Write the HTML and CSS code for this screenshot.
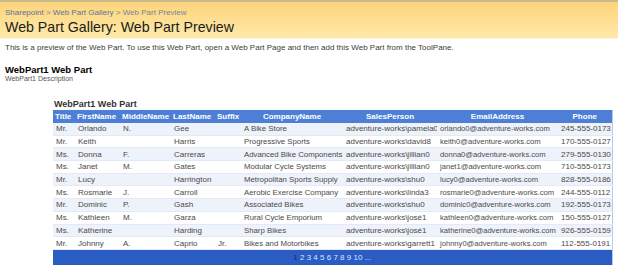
FILE: index.html
```html
<!DOCTYPE html>
<html lang="en">
  <head>
    <meta charset="UTF-8" />
    <title>Web Part Preview</title>
    <link rel="stylesheet" href="styles.css">
  </head>

  <body>
    <div class="titlebar">
      <div class="crumbs">
        <a href="#">Sharepoint</a> &gt; <a href="#">Web Part Gallery</a> &gt; Web Part Preview
      </div>
      <h1>Web Part Gallery: Web Part Preview</h1>
    </div>
    <!--titlebar end-->

    <p class="intro">This is a preview of the Web Part. To use this Web Part, open a Web Part Page and then add this Web Part from the ToolPane.</p>

    <div class="part">
      <h2>WebPart1 Web Part</h2>
      <div class="desc">WebPart1 Description</div>
    </div>

    <div class="grid">
      <h3>WebPart1 Web Part</h3>
      <table>
        <colgroup>
          <col class="c-title" />
          <col class="c-first" />
          <col class="c-middle" />
          <col class="c-last" />
          <col class="c-suffix" />
          <col class="c-company" />
          <col class="c-sales" />
          <col class="c-email" />
          <col class="c-phone" />
        </colgroup>
        <thead>
          <tr>
            <th>Title</th>
            <th>FirstName</th>
            <th>MiddleName</th>
            <th>LastName</th>
            <th>Suffix</th>
            <th>CompanyName</th>
            <th>SalesPerson</th>
            <th>EmailAddress</th>
            <th>Phone</th>
          </tr>
        </thead>
        <tbody>
          <tr><td>Mr.</td><td>Orlando</td><td>N.</td><td>Gee</td><td></td><td>A Bike Store</td><td>adventure-works\pamela0</td><td>orlando0@adventure-works.com</td><td>245-555-0173</td></tr>
          <tr><td>Mr.</td><td>Keith</td><td></td><td>Harris</td><td></td><td>Progressive Sports</td><td>adventure-works\david8</td><td>keith0@adventure-works.com</td><td>170-555-0127</td></tr>
          <tr><td>Ms.</td><td>Donna</td><td>F.</td><td>Carreras</td><td></td><td>Advanced Bike Components</td><td>adventure-works\jillian0</td><td>donna0@adventure-works.com</td><td>279-555-0130</td></tr>
          <tr><td>Ms.</td><td>Janet</td><td>M.</td><td>Gates</td><td></td><td>Modular Cycle Systems</td><td>adventure-works\jillian0</td><td>janet1@adventure-works.com</td><td>710-555-0173</td></tr>
          <tr><td>Mr.</td><td>Lucy</td><td></td><td>Harrington</td><td></td><td>Metropolitan Sports Supply</td><td>adventure-works\shu0</td><td>lucy0@adventure-works.com</td><td>828-555-0186</td></tr>
          <tr><td>Ms.</td><td>Rosmarie</td><td>J.</td><td>Carroll</td><td></td><td>Aerobic Exercise Company</td><td>adventure-works\linda3</td><td>rosmarie0@adventure-works.com</td><td>244-555-0112</td></tr>
          <tr><td>Mr.</td><td>Dominic</td><td>P.</td><td>Gash</td><td></td><td>Associated Bikes</td><td>adventure-works\shu0</td><td>dominic0@adventure-works.com</td><td>192-555-0173</td></tr>
          <tr><td>Ms.</td><td>Kathleen</td><td>M.</td><td>Garza</td><td></td><td>Rural Cycle Emporium</td><td>adventure-works\josé1</td><td>kathleen0@adventure-works.com</td><td>150-555-0127</td></tr>
          <tr><td>Ms.</td><td>Katherine</td><td></td><td>Harding</td><td></td><td>Sharp Bikes</td><td>adventure-works\josé1</td><td>katherine0@adventure-works.com</td><td>926-555-0159</td></tr>
          <tr><td>Mr.</td><td>Johnny</td><td>A.</td><td>Caprio</td><td>Jr.</td><td>Bikes and Motorbikes</td><td>adventure-works\garrett1</td><td>johnny0@adventure-works.com</td><td>112-555-0191</td></tr>
        </tbody>
        <tfoot>
          <tr>
            <td colspan="9" class="pager">
              <span class="current">1</span>
              <a href="#">2</a> <a href="#">3</a> <a href="#">4</a> <a href="#">5</a>
              <a href="#">6</a> <a href="#">7</a> <a href="#">8</a> <a href="#">9</a>
              <a href="#">10</a> <a href="#">...</a>
            </td>
          </tr>
        </tfoot>
      </table>
    </div>
    <!--grid end-->
  </body>
</html>
```

FILE: styles.css
```css
body,
html {
  margin: 0;
  padding: 0;
  font-family: "Liberation Sans", Arial, sans-serif;
  background: #fff;
  overflow: hidden;
}

.titlebar {
  height: 39px;
  padding: 6px 5px 0;
  border-top: 2px solid #c9b98f;
  border-bottom: 1px solid #fbf3dc;
  background: linear-gradient(#fdd47b, #fee9aa);
  box-sizing: border-box;
}

.crumbs {
  font-size: 8px;
  color: #7a8594;
  line-height: 9px;
}

.crumbs a {
  color: #5b7394;
  text-decoration: none;
}

h1 {
  margin: 1px 0 0;
  font-weight: normal;
  font-size: 14.2px;
  line-height: 19px;
  color: #1b1b1b;
}

.intro {
  margin: 4px 0 0 5px;
  font-size: 8px;
  line-height: 9px;
  color: #3c3c3c;
  white-space: nowrap;
}

.part {
  margin: 12px 0 0 5px;
}

.part h2 {
  margin: 0;
  font-size: 9.5px;
  line-height: 11px;
  color: #000;
}

.desc {
  font-size: 7px;
  line-height: 8px;
  color: #555;
}

.grid {
  margin: 16px 0 0 53px;
  width: 559px;
}

.grid h3 {
  margin: 0 0 1px 1px;
  font-size: 9px;
  line-height: 10px;
  color: #333;
}

table {
  width: 559px;
  table-layout: fixed;
  border-collapse: collapse;
  border-right: 1px solid #b7c9ea;
  font-size: 8px;
  color: #4a4a4a;
}

.c-title { width: 22px; }
.c-first { width: 45px; }
.c-middle { width: 51px; }
.c-last { width: 44px; }
.c-suffix { width: 26px; }
.c-company { width: 102px; }
.c-sales { width: 94px; }
.c-email { width: 121px; }
.c-phone { width: 54px; }

th {
  height: 13px;
  padding: 0 2px;
  background: #4d7fd6;
  color: #fff;
  font-weight: bold;
  font-size: 8px;
  white-space: nowrap;
  text-align: center;
}

th:nth-child(-n+5) {
  text-align: left;
}

td {
  height: 11.7px;
  padding: 0 0 0 3px;
  white-space: nowrap;
  overflow: hidden;
  border-bottom: 1px solid #e4eaf5;
}

td:nth-child(6) {
  font-size: 7.8px;
}

td:nth-child(8) {
  font-size: 7.6px;
}

tbody tr:nth-child(odd) td {
  background: #eef2fa;
}

tbody tr:nth-child(even) td {
  background: #fff;
}

td.pager {
  height: 15px;
  padding: 0;
  background: #2a5cc4;
  border: 0;
  text-align: center;
  font-size: 8px;
  color: #0c2f7a;
}

.pager a {
  color: #dbe6fb;
  text-decoration: none;
}
```
